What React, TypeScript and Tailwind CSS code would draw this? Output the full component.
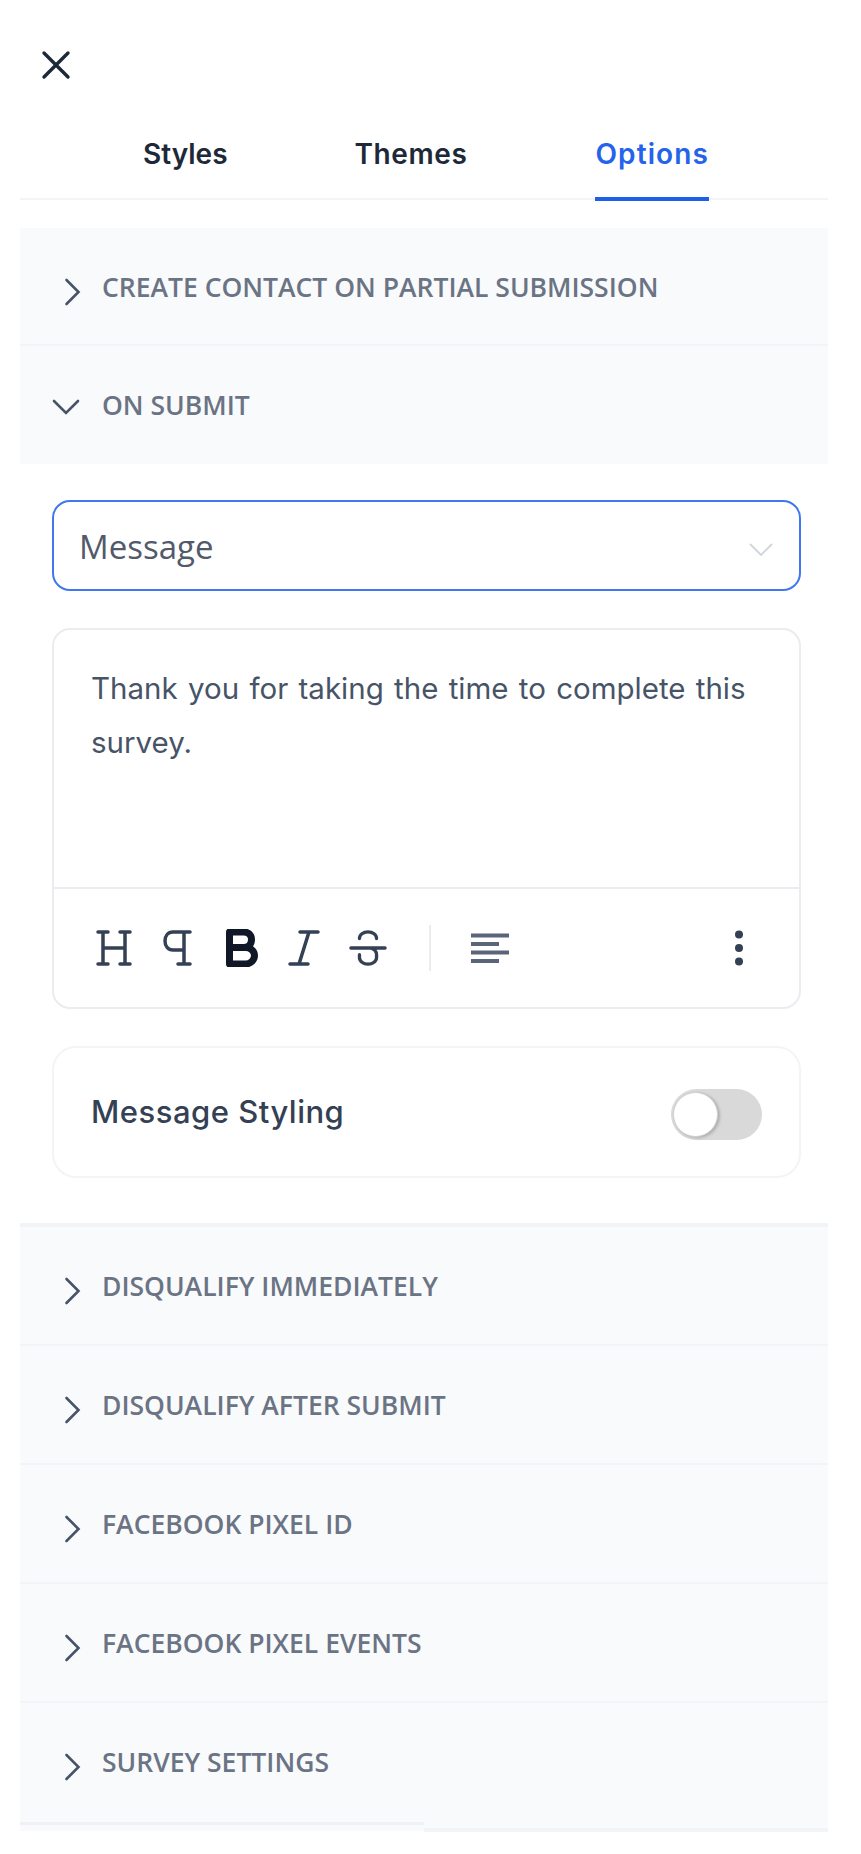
import { X } from "lucide-react";

const inter = "font-['Inter',sans-serif]";
const openSans = "font-['Open_Sans',sans-serif]";

function SectionRow({
  title,
  open = false,
  last = false,
  tall = false,
}: {
  title: string;
  open?: boolean;
  last?: boolean;
  tall?: boolean;
}) {
  return (
    <div
      className={`bg-[#f9fafc] flex items-start ${tall ? "h-[119px]" : "h-[118px]"} ${
        last ? "" : "border-b-2 border-[#f2f4f7]"
      }`}
    >
      {open ? (
        <svg className="ml-[32px] mt-[53px] text-[#475467]" width="28" height="16" viewBox="0 0 28 16" fill="none" stroke="currentColor" strokeWidth="2.6" strokeLinecap="round">
          <path d="M2 2l12 12L26 2" />
        </svg>
      ) : (
        <svg className="ml-[44px] mt-[50px] text-[#475467]" width="17" height="28" viewBox="0 0 17 28" fill="none" stroke="currentColor" strokeWidth="2.6" strokeLinecap="round">
          <path d="M2.500 2L14.500 14L2.500 26" />
        </svg>
      )}
      <span
        className={`${openSans} ${open ? "ml-[22px]" : "ml-[21px]"} mt-[38px] text-[26.5px] leading-[42px] font-semibold text-[#6b7484] whitespace-nowrap`}
      >
        {title}
      </span>
    </div>
  );
}

function Toolbar() {
  return (
    <div className="h-[118px] flex items-center pl-[42px] pr-[55px] text-[#344054]">
      <svg width="36" height="36" viewBox="0 0 36 36" fill="none" stroke="currentColor" strokeWidth="3.500" strokeLinecap="round">
        <path d="M7 2v32M29 2v32M7 18h22M2 2h10M24 2h10M2 34h10M24 34h10" />
      </svg>
      <svg className="ml-[31px]" width="29" height="36" viewBox="0 0 29 36" fill="none" stroke="currentColor" strokeWidth="3.500" strokeLinecap="round">
        <path d="M27 2H10C5 2 2 6 2 11s3 9 8 9h11M21 2v32M15 34h12" />
      </svg>
      <svg className="ml-[33px]" width="33" height="38" viewBox="0 0 32 38" fill="none" stroke="#101828" strokeWidth="7" strokeLinejoin="round">
        <path d="M4 3h14c5 0 8 3 8 7.500s-3 8-8 8H4zM4 18.500h16c5 0 9 3.500 9 8s-4 8.500-9 8.500H4z" />
      </svg>
      <svg className="ml-[30px]" width="32" height="36" viewBox="0 0 32 36" fill="none" stroke="currentColor" strokeWidth="3.500" strokeLinecap="round">
        <path d="M12 2h18M2 34h18M21 2l-10 32" />
      </svg>
      <svg className="ml-[29px]" width="38" height="38" viewBox="0 0 40 38" fill="none" stroke="currentColor" strokeWidth="3.500" strokeLinecap="round">
        <path d="M2 19h36M29 9c0-4-4-7-9-7s-9 3-9 7M11 26v3c0 4 4 7 9 7s9-3 9-7v-3c0-4-3-6-6-7" />
      </svg>
      <div className="ml-[42px] w-[2px] h-[46px] bg-[#eaecf0]" />
      <svg className="ml-[40px]" width="38" height="30" viewBox="0 0 38 30" fill="none" stroke="#5b6579" strokeWidth="4">
        <path d="M0 2.500h38M0 11h28M0 19.500h38M0 28h28" />
      </svg>
      <svg className="ml-auto" width="10" height="36" viewBox="0 0 10 36" fill="#344054">
        <circle cx="5" cy="4.500" r="4" />
        <circle cx="5" cy="18" r="4" />
        <circle cx="5" cy="31.500" r="4" />
      </svg>
    </div>
  );
}

export default function App() {
  const tabs = [
    { name: "Styles", style: "text-[#1d2939]" },
    { name: "Themes", style: "text-[#1d2939] tracking-[0.6px]" },
    { name: "Options", style: "ml-[1px] text-[#2563eb] tracking-[1.1px] border-b-[4px] border-[#1d5fe8]" },
  ];

  return (
    <div className="w-[861px] h-[1854px] bg-white overflow-hidden">
      <div className="h-[89px] pt-[41px] pl-[32px]">
        <X className="w-[48px] h-[48px] text-[#1d2939]" strokeWidth={1.7} />
      </div>

      <div className="ml-[20px] w-[808px] h-[111px] border-b-2 border-[#f2f4f7] flex pl-[123px] gap-[127px]">
        {tabs.map((tab) => (
          <div key={tab.name} className={`${inter} h-[112px] pt-[43px] text-[28px] leading-[44px] font-semibold ${tab.style}`}>
            {tab.name}
          </div>
        ))}
      </div>

      <div className="ml-[20px] w-[808px] mt-[28px]">
        <SectionRow title="CREATE CONTACT ON PARTIAL SUBMISSION" />
        <SectionRow title="ON SUBMIT" open last />

        <div className="pl-[32px] pr-[27px] pt-[36px] pb-[45px] flex flex-col gap-[37px]">
          <div className="h-[91px] border-2 border-[#3f78ee] rounded-[18px] flex items-center pl-[25px] pr-[26px]">
            <span className={`${openSans} text-[33px] pt-[3px] text-[#52596a]`}>Message</span>
            <svg className="ml-auto mt-[8px] text-[#d0d5dd]" width="24" height="14" viewBox="0 0 24 14" fill="none" stroke="currentColor" strokeWidth="1.800" strokeLinecap="round">
              <path d="M1.500 1.500L12 12L22.500 1.500" />
            </svg>
          </div>

          <div className="border-2 border-[#eaecf0] rounded-[18px]">
            <p className={`${inter} h-[257px] px-[37px] pt-[31px] text-[29.5px] leading-[54px] [word-spacing:2px] text-[#475467]`}>
              Thank you for taking the time to complete this survey.
            </p>
            <div className="border-t-2 border-[#eaecf0]">
              <Toolbar />
            </div>
          </div>

          <div className="h-[132px] border-2 border-[#f2f4f7] rounded-[24px] flex items-center pl-[37px] pr-[37px]">
            <span className={`${inter} text-[31px] tracking-[0.5px] font-medium text-[#344054]`}>Message Styling</span>
            <div className="ml-auto mt-[4px] w-[91px] h-[51px] rounded-full bg-[#d9d9d9] flex items-center pl-[2px]">
              <div className="w-[45px] h-[45px] rounded-full bg-white border border-[#d0d0d0] shadow-[2px_1px_3px_rgba(0,0,0,0.2)]" />
            </div>
          </div>
        </div>

        <div className="border-t-[4px] border-[#f2f4f7]">
          <SectionRow title="DISQUALIFY IMMEDIATELY" tall />
          <SectionRow title="DISQUALIFY AFTER SUBMIT" tall />
          <SectionRow title="FACEBOOK PIXEL ID" tall />
          <SectionRow title="FACEBOOK PIXEL EVENTS" tall />
          <SectionRow title="SURVEY SETTINGS" tall last />
        </div>
        <div className="flex">
          <div className="w-[404px] h-[9px] bg-[#f9fafc] border-t-[3px] border-[#f2f0f7]" />
          <div className="flex-1 h-[10px] bg-[#f9fafc] border-b-[4px] border-[#f2f4f7]" />
        </div>
      </div>
    </div>
  );
}
